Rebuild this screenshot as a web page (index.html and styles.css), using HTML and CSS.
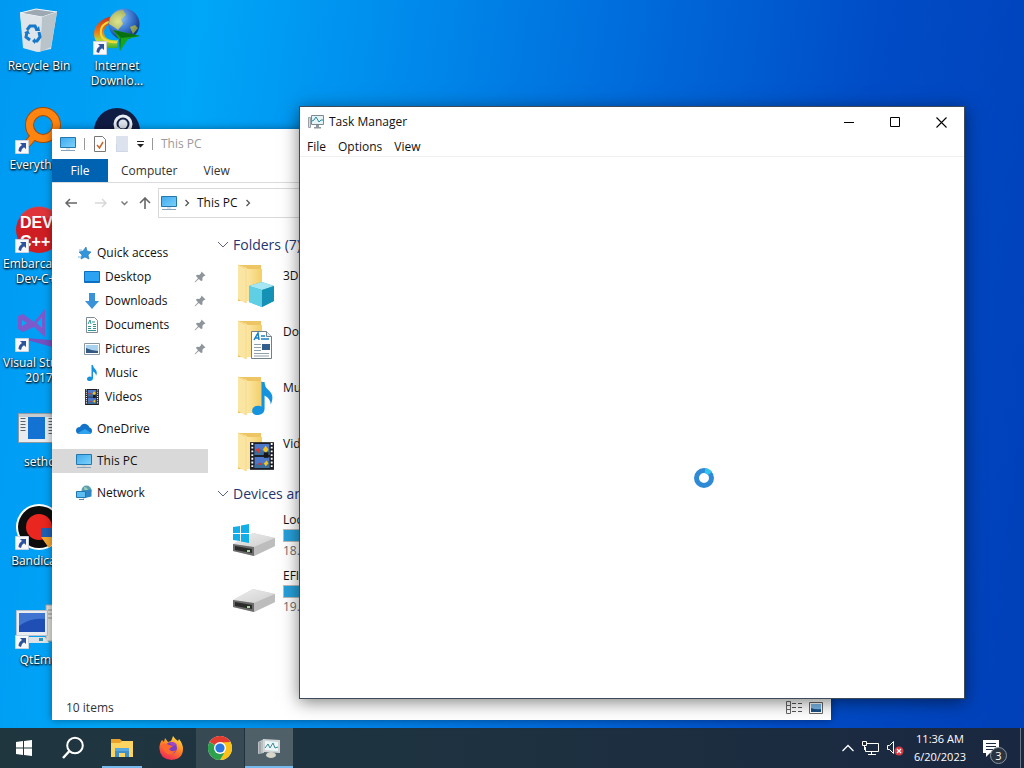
FILE: index.html
```html
<!DOCTYPE html>
<html lang="en">
<head>
    <meta charset="UTF-8">
    <meta name="viewport" content="width=device-width, initial-scale=1.0">
    <title>Desktop</title>
    <link rel="stylesheet" href="styles.css">
</head>
<body>

    <!-- shared icons -->
    <svg class="sprite" aria-hidden="true">
        <defs>
            <linearGradient id="gScreen" x1="0" y1="0" x2="1" y2="1">
                <stop offset="0" stop-color="#3fa9ee"/><stop offset="1" stop-color="#7dd3fb"/>
            </linearGradient>
            <linearGradient id="gFolder" x1="0" y1="0" x2="1" y2="0">
                <stop offset="0" stop-color="#fbe6a2"/><stop offset="1" stop-color="#f4ce68"/>
            </linearGradient>
            <linearGradient id="gDrive" x1="0" y1="0" x2="1" y2="1">
                <stop offset="0" stop-color="#ededed"/><stop offset="1" stop-color="#cfcfcf"/>
            </linearGradient>
            <linearGradient id="gFox" x1="0.8" y1="0" x2="0.3" y2="1">
                <stop offset="0" stop-color="#ffe14a"/><stop offset="0.45" stop-color="#ff8a22"/><stop offset="1" stop-color="#f0245a"/>
            </linearGradient>
            <radialGradient id="gGlobe" cx="0.35" cy="0.3" r="0.75">
                <stop offset="0" stop-color="#a9cfe6"/><stop offset="0.4" stop-color="#4f8bdc"/><stop offset="0.7" stop-color="#2a60b8"/><stop offset="1" stop-color="#12306e"/>
            </radialGradient>
            <radialGradient id="gLand" cx="0.3" cy="0.5" r="0.8">
                <stop offset="0" stop-color="#f0ec7a"/><stop offset="1" stop-color="#8d9a3a"/>
            </radialGradient>
            <linearGradient id="gRing" x1="0" y1="0" x2="0" y2="1">
                <stop offset="0" stop-color="#c8301a"/><stop offset="0.5" stop-color="#ee7a1b"/><stop offset="0.75" stop-color="#b6d636"/><stop offset="1" stop-color="#3fae2a"/>
            </linearGradient>
        </defs>
        <symbol id="shortcut" viewBox="0 0 14 14">
            <path d="M.5.5h13v13H.5z" fill="#f6f8fb" stroke="#c9d3df"/>
            <path d="M5 3h6v6L9 7.200Q6.500 8.500 6 12L3.500 11Q3.500 7 7 5z" fill="#2f529c"/>
        </symbol>
        <symbol id="pc" viewBox="0 0 16 16">
            <path d="M.5 1.500h15v10H.5z" fill="url(#gScreen)" stroke="#2477ab"/>
            <path d="M1 14.500h14" stroke="#86a5bd"/>
            <path d="M6 13h4" stroke="#b8c9d6"/>
        </symbol>
        <symbol id="pin" viewBox="0 0 12 12">
            <path d="M7.500.5l4 4-1.500.6-1.600 1.700.1 2.700L7 10 4.800 7.900 1 11.500.6 11 4 7.200 2 5l.8-1.200 2.500.2L7 2.200z" fill="#8e9499"/>
        </symbol>
        <symbol id="folder" viewBox="0 0 48 48">
            <path d="M6 6q0-1 1-1h22v36H6z" fill="#eec565"/>
            <path d="M6 5l9 3v33q0 3-2 2l-7-4z" fill="#fbe5a3"/>
            <path d="M15 9h15v32H15z" fill="url(#gFolder)"/>
            <path d="M6 5l8 4v34" fill="none" stroke="#f7da8b"/>
        </symbol>
        <symbol id="film" viewBox="0 0 26 30">
            <path d="M0 0h26v30H0z" fill="#1e1f24"/>
            <path d="M5 2h16v12H5zM5 16h16v12H5z" fill="#4d78c9"/>
            <path d="M5 10l5-3 5 4 6-2v5H5zM5 25l6-3 4 2 6-4v8H5z" fill="#3c6f9c"/>
            <path d="M6 8l3-2 2 3-2 3zM8 24l3-2 2 3z" fill="#d83a2d"/>
            <path d="M14 8l3-4 3 4-3 4zM15 23l3-3 2 3-3 3z" fill="#f2c21d"/>
            <path d="M15 11h5v6h-5z" fill="#171717"/>
            <path d="M2.500 1v28M23.500 1v28" stroke="#fff" stroke-width="2" stroke-dasharray="2 2"/>
        </symbol>
        <symbol id="note" viewBox="0 0 20 32">
            <path d="M9 0h3q0 5 4 8 6 5 2 14 0-6-6-9v13q0 5-6 6-6 0-6-4 0-5 6-5 2 0 3 1z" fill="#1593df"/>
        </symbol>
        <symbol id="chevR" viewBox="0 0 6 8"><path d="M1.500 1l3 3-3 3" fill="none" stroke="#555" stroke-width="1.300"/></symbol>
        <symbol id="chevD" viewBox="0 0 12 8"><path d="M1 1l5 5 5-5" fill="none" stroke="#5a6480"/></symbol>
        <symbol id="drive" viewBox="0 0 44 24">
            <path d="M1 11L21 0l22 5v8L22 23 1 18z" fill="#cfcfcf"/>
            <path d="M1 11L21 0l22 5-21 9z" fill="url(#gDrive)"/>
            <path d="M22 14l21-9v8L22 23z" fill="#bdbdbd"/>
            <path d="M1 11l21 3v9L1 18z" fill="#6a6a6a"/>
            <path d="M3 13l17 3v4L3 17z" fill="#2a2a2a"/>
            <path d="M15 17h3v2h-3z" fill="#a8d8a0"/>
        </symbol>
    </svg>

    <main class="desktop">
        <div class="shortcuts">
            <a href="#" class="shortcut">
                <span class="picture">
                    <svg viewBox="0 0 48 48">
                        <path d="M5 5l16-4 21 3-6 37-14 3-14-4z" fill="#dfe6ea" opacity=".95"/>
                        <path d="M5 5l16-4 21 3-15 5z" fill="#9ca9b3" stroke="#f3f6f8"/>
                        <path d="M27 9l15-5-6 35-11 5z" fill="#b9c3ca"/>
                        <path d="M5 5l22 4-2 35-16-4z" fill="#dde5ea"/>
                        <path d="M12 22l3-4h5l2 4M24 24l1 5-3 4h-3M15 32l-4-3 1-5" fill="none" stroke="#1678c8" stroke-width="3"/>
                        <path d="M20 23h5l-1-5zM20 30v6l-3-3zM9 25l4-3 2 4z" fill="#1678c8"/>
                    </svg>
                </span>
                <span class="label">Recycle Bin</span>
            </a>
            <a href="#" class="shortcut">
                <span class="picture">
                    <svg viewBox="0 0 48 48">
                        <path d="M20 8C8 10 1 18 1 26c0 10 9 15 23 14l1-8c-9 1-14-2-14-8 0-5 4-8 9-9z" fill="url(#gRing)"/>
                        <path d="M19 13C10 15 7 20 8 26c1 6 8 9 16 8" fill="none" stroke="#f4d934" stroke-width="2"/>
                        <circle cx="31" cy="16" r="15.500" fill="url(#gGlobe)"/>
                        <path d="M17 10q5-8 13-8l3 5-5 4 2 5-5 6-4-3-5-3zM37 19l5-2 3 3-5 6z" fill="url(#gLand)" opacity=".85"/>
                        <path d="M20 22l27 6-12 3-8 12-1-12z" fill="#18a51e"/>
                        <path d="M20 22l27 6-19 2zM28 30l-1 13-1-12z" fill="#087013"/>
                    </svg>
                    <svg class="badge"><use href="#shortcut"/></svg>
                </span>
                <span class="label">Internet Downlo...</span>
            </a>
            <a href="#" class="shortcut">
                <span class="picture">
                    <svg viewBox="0 0 48 48">
                        <path d="M6 44l12-14" stroke="#a34c05" stroke-width="8"/>
                        <circle cx="28" cy="18" r="13.500" fill="none" stroke="#a34c05" stroke-width="9"/>
                        <path d="M7 43l12-14" stroke="#ff8410" stroke-width="6"/>
                        <circle cx="28" cy="18" r="13.500" fill="none" stroke="#ff8410" stroke-width="7"/>
                    </svg>
                    <svg class="badge"><use href="#shortcut"/></svg>
                </span>
                <span class="label">Everything</span>
            </a>
            <a href="#" class="shortcut">
                <span class="picture">
                    <svg viewBox="0 0 48 48">
                        <circle cx="24" cy="24" r="23" fill="#cf1d24"/>
                        <path d="M4 12a23 23 0 0 1 40 0z" fill="#e8444a" opacity=".6"/>
                        <text x="5" y="22" class="dev-text">DEV</text>
                        <text x="5" y="41" class="dev-text">C++</text>
                    </svg>
                    <svg class="badge"><use href="#shortcut"/></svg>
                </span>
                <span class="label">Embarcadero Dev-C++</span>
            </a>
            <a href="#" class="shortcut">
                <span class="picture">
                    <svg viewBox="0 0 48 48">
                        <path d="M3 11l5-2 11 8L30 4v28L19 22 8 27l-5-3z" fill="#7d5acb"/>
                        <path d="M7 15v6l5-3zM27 12l-5 6 5 5z" fill="#00aafa"/>
                        <path d="M10 33l38 3v9L12 35z" fill="#7450c0"/>
                    </svg>
                    <svg class="badge"><use href="#shortcut"/></svg>
                </span>
                <span class="label">Visual Studio 2017</span>
            </a>
            <a href="#" class="shortcut">
                <span class="picture">
                    <svg viewBox="0 0 48 48">
                        <path d="M3.500 9.500h41v29h-41z" fill="#e9ecee" stroke="#8f9aa3"/>
                        <path d="M4 10h40v3H4z" fill="#c7ccd1"/>
                        <path d="M13 13h17v22H13z" fill="#1473d2"/>
                        <path d="M8 14v15M36 14v17" stroke="#5c646b" stroke-width="5" stroke-dasharray="1 2"/>
                    </svg>
                </span>
                <span class="label">sethc</span>
            </a>
            <a href="#" class="shortcut">
                <span class="picture">
                    <svg viewBox="0 0 48 48">
                        <circle cx="24" cy="24" r="23" fill="#fff"/>
                        <circle cx="24" cy="24" r="21" fill="#0d0d0d"/>
                        <circle cx="24" cy="24" r="13" fill="#e9261f"/>
                        <path d="M26 25h20v9H26z" fill="#1f5fb4"/>
                        <path d="M26 34h18l-10 11z" fill="#f2a531"/>
                    </svg>
                    <svg class="badge"><use href="#shortcut"/></svg>
                </span>
                <span class="label">Bandicam</span>
            </a>
            <a href="#" class="shortcut">
                <span class="picture">
                    <svg viewBox="0 0 48 48">
                        <path d="M31 3h14v36H31z" fill="#dfdfd8" stroke="#a7a9a6"/>
                        <path d="M33 8h10M33 12h10M33 16h10" stroke="#8e918f"/>
                        <path d="M1.500 8.500h31v25h-31z" fill="#e9edf2" stroke="#b9c2cc"/>
                        <path d="M4 11h26v19H4z" fill="#1f4fb4"/>
                        <path d="M4 11h26v6Q16 15 4 24z" fill="#3f74d0"/>
                        <path d="M12 35h18l4 6H14z" fill="#dce2e6"/>
                        <path d="M24 36h4v3h-4z" fill="#2c95b5"/>
                    </svg>
                    <svg class="badge"><use href="#shortcut"/></svg>
                </span>
                <span class="label">QtEmu</span>
            </a>
            <a href="#" class="shortcut steam" aria-label="Steam">
                <span class="picture">
                    <svg viewBox="0 0 48 48">
                        <circle cx="24" cy="24" r="23" fill="#111c44"/>
                        <circle cx="30" cy="17" r="8" fill="#111c44" stroke="#e8ebf2" stroke-width="3"/>
                        <circle cx="30" cy="17" r="4.500" fill="#dfe3ec"/>
                        <path d="M23 19l-6 10-14-4v5l14 7 7-5 9-7z" fill="#e8ebf2"/>
                    </svg>
                </span>
            </a>
        </div>

        <section class="window explorer">
            <header class="quickbar">
                <svg class="icon16"><use href="#pc"/></svg>
                <span class="sep"></span>
                <button aria-label="Properties">
                    <svg width="14" height="16" viewBox="0 0 14 16"><path d="M1.500.5h8l3 3v12h-11z" fill="#fff" stroke="#777"/><path d="M4 9l2.500 3L10 6" fill="none" stroke="#c8632b" stroke-width="1.500"/></svg>
                </button>
                <button aria-label="New folder">
                    <svg width="14" height="16" viewBox="0 0 14 16"><path d="M1 0h12v16H1z" fill="#dde2ef"/><path d="M1.500 8v7.500h11" fill="none" stroke="#cfd6e6"/></svg>
                </button>
                <button aria-label="Customize">
                    <svg width="7" height="8" viewBox="0 0 7 8"><path d="M0 1.500h7" stroke="#222"/><path d="M0 4h7L3.500 7.500z" fill="#222"/></svg>
                </button>
                <span class="sep"></span>
                <span class="caption">This PC</span>
            </header>
            <nav class="ribbon">
                <button class="active">File</button>
                <button>Computer</button>
                <button>View</button>
            </nav>
            <div class="toolbar">
                <button class="wide" aria-label="Back"><svg width="12" height="10" viewBox="0 0 12 10"><path d="M12 5H1M5 1L1 5l4 4" fill="none" stroke="#666" stroke-width="1.500"/></svg></button>
                <button class="wide" aria-label="Forward"><svg width="12" height="10" viewBox="0 0 12 10"><path d="M0 5h11M7 1l4 4-4 4" fill="none" stroke="#d8d8d8" stroke-width="1.500"/></svg></button>
                <button class="narrow" aria-label="Recent locations"><svg width="7" height="5" viewBox="0 0 7 5"><path d="M.5.5l3 3 3-3" fill="none" stroke="#777" stroke-width="1.400"/></svg></button>
                <button class="up" aria-label="Up"><svg width="12" height="12" viewBox="0 0 12 12"><path d="M6 12V1M1 6l5-5 5 5" fill="none" stroke="#666" stroke-width="1.600"/></svg></button>
                <div class="address">
                    <svg class="icon16"><use href="#pc"/></svg>
                    <svg class="crumb"><use href="#chevR"/></svg>
                    <button>This PC</button>
                    <svg class="crumb"><use href="#chevR"/></svg>
                </div>
            </div>
            <div class="content">
                <nav class="sidebar">
                    <a href="#">
                        <svg class="icon16" viewBox="0 0 16 16"><path d="M10 2l1 4 4 1-3 3 1 4-4-2-4 2 1-4-3-3 4-1z" fill="#3396dd" stroke="#1d73b4" stroke-width=".6"/><path d="M3 5h3M2 12h3" stroke="#6db7eb"/></svg>
                        <span>Quick access</span>
                    </a>
                    <a href="#" class="nested">
                        <svg class="icon16" viewBox="0 0 16 16"><path d="M.5 2.500h15v11H.5z" fill="#2ba3f2" stroke="#0d6fbd"/><path d="M1 12.500h14" stroke="#0d6fbd"/></svg>
                        <span>Desktop</span>
                        <svg class="pin"><use href="#pin"/></svg>
                    </a>
                    <a href="#" class="nested">
                        <svg class="icon16" viewBox="0 0 16 16"><path d="M5 0h6v8h4l-7 8-7-8h4z" fill="#3a93d8"/></svg>
                        <span>Downloads</span>
                        <svg class="pin"><use href="#pin"/></svg>
                    </a>
                    <a href="#" class="nested">
                        <svg class="icon16" viewBox="0 0 16 16"><path d="M2.500.5h8l3 3v12h-11z" fill="#fff" stroke="#7f8b93"/><path d="M4 7l2-4 1 4M8 5h3M4 9.500h3M9 7.500h3M9 9.500h3M4 11.500h3M9 11.500h3M4 13.500h8" fill="none" stroke="#2e958f"/></svg>
                        <span>Documents</span>
                        <svg class="pin"><use href="#pin"/></svg>
                    </a>
                    <a href="#" class="nested">
                        <svg class="icon16" viewBox="0 0 16 16"><path d="M.5 2.500h15v11H.5z" fill="#fff" stroke="#8b98a3"/><path d="M2 4h12v8H2z" fill="#a9d2ef"/><path d="M2 7q6 3 12 3v2H2z" fill="#33597f"/></svg>
                        <span>Pictures</span>
                        <svg class="pin"><use href="#pin"/></svg>
                    </a>
                    <a href="#" class="nested">
                        <svg class="icon16"><use href="#note"/></svg>
                        <span>Music</span>
                    </a>
                    <a href="#" class="nested">
                        <svg class="icon16"><use href="#film"/></svg>
                        <span>Videos</span>
                    </a>
                    <a href="#" class="root">
                        <svg class="icon16" viewBox="0 0 16 16"><path d="M4 13q-4 0-4-3.500T4 6q2-4 6-3 3 1 3.500 3.500Q16 7 16 10t-3 3z" fill="#1273c8"/><path d="M2 12l7-4 6 4q-1 1-2 1H4z" fill="#2fa4ee"/></svg>
                        <span>OneDrive</span>
                    </a>
                    <a href="#" class="root selected">
                        <svg class="icon16"><use href="#pc"/></svg>
                        <span>This PC</span>
                    </a>
                    <a href="#" class="root">
                        <svg class="icon16" viewBox="0 0 16 16"><circle cx="10.500" cy="5.500" r="5" fill="#5c9fb0"/><path d="M8 2q3 0 4 3l-3 3z" fill="#9ccfb4"/><path d="M7 5.500l8.500-1v7l-8.500 2z" fill="#2f86c4"/><path d="M.5 6.500h9v6h-9z" fill="#5cbdf2" stroke="#2477ab"/><path d="M3 14.500h5" stroke="#5d8ba8"/></svg>
                        <span>Network</span>
                    </a>
                </nav>
                <div class="files">
                    <h2><svg class="arrow"><use href="#chevD"/></svg>Folders (7)</h2>
                    <a href="#" class="tile">
                        <svg class="big" viewBox="0 0 48 48"><use href="#folder"/><path d="M17 26l13-4 12 4v15l-12 6-13-5z" fill="#2fb5d8"/><path d="M17 26l13-4 12 4-12 4z" fill="#a6e6f2"/><path d="M30 30l12-4v15l-12 6z" fill="#1591b5"/><path d="M17 26l13 4v17l-13-5z" fill="#5fcfe5"/></svg>
                        <span class="name">3D Objects</span>
                    </a>
                    <a href="#" class="tile">
                        <svg class="big" viewBox="0 0 48 48"><use href="#folder"/><path d="M19.500 15.500h15l5 5v22h-20z" fill="#fff" stroke="#70808b"/><path d="M34.500 15.500v5h5" fill="#e6ecf0" stroke="#70808b"/><path d="M22 24l4-7 1 7M23 22h4M29 20h4M29 23h8" fill="none" stroke="#1680c4" stroke-width="1.500"/><path d="M22 28.500h7M22 31.500h7M22 34.500h7M22 37.500h15M22 40h15" stroke="#8fa0ab"/><path d="M30 28h8v6h-8z" fill="#315f8d"/></svg>
                        <span class="name">Documents</span>
                    </a>
                    <a href="#" class="tile">
                        <svg class="big" viewBox="0 0 48 48"><use href="#folder"/><use href="#note" x="20" y="10" width="21" height="33"/></svg>
                        <span class="name">Music</span>
                    </a>
                    <a href="#" class="tile">
                        <svg class="big" viewBox="0 0 48 48"><use href="#folder"/><use href="#film" x="18" y="14" width="24" height="28"/></svg>
                        <span class="name">Videos</span>
                    </a>
                    <h2><svg class="arrow"><use href="#chevD"/></svg>Devices and drives (3)</h2>
                    <a href="#" class="tile">
                        <svg class="big" viewBox="0 0 48 48"><use href="#drive" x="0" y="24" width="44" height="24"/><path d="M1 18l7-1v7H1zM9 16.500l8-1.500v9H9zM1 25h7v7l-7-1zM9 25h8v9l-8-1.500z" fill="#12aee8"/></svg>
                        <span class="drive">
                            <span class="name">Local Disk (C:)</span>
                            <span class="bar"></span>
                            <span class="free">18.2 GB free of 49.4 GB</span>
                        </span>
                    </a>
                    <a href="#" class="tile">
                        <svg class="big" viewBox="0 0 48 48"><use href="#drive" x="0" y="24" width="44" height="24"/></svg>
                        <span class="drive">
                            <span class="name">EFI (E:)</span>
                            <span class="bar"></span>
                            <span class="free">19.5 MB free of 95.0 MB</span>
                        </span>
                    </a>
                </div>
            </div>
            <footer class="status">
                <span>10 items</span>
                <button aria-label="Details"><svg width="18" height="14" viewBox="0 0 18 14"><path d="M.5.5h4v12h-4zM.5 4.500h4M.5 8.500h4" fill="none" stroke="#666"/><path d="M6 2.500h12M6 6.500h12M6 10.500h12" stroke="#555" stroke-dasharray="4 2"/></svg></button>
                <button aria-label="Large icons"><svg width="14" height="12" viewBox="0 0 14 12"><path d="M.5.5h13v11H.5z" fill="#fff" stroke="#666"/><path d="M2 2h10v8H2z" fill="#79b6e6"/><path d="M2 6q5 2 10 1v3H2z" fill="#1d4f86"/></svg></button>
            </footer>
        </section>

        <section class="window taskmanager">
            <header class="titlebar">
                <svg class="icon16" viewBox="0 0 16 16"><path d="M.5 3.500h2v10h-2z" fill="#d7dcdf" stroke="#9aa2a7"/><path d="M3.500 1.500h12v9h-12z" fill="#e6f3f4" stroke="#7b8a92"/><path d="M4 7l2-1 2-3 3 5 2-2h2" fill="none" stroke="#2a8a9e"/><path d="M8 11h3v2h2v1.500H6V13h2z" fill="#8d979c"/></svg>
                <h1>Task Manager</h1>
                <button aria-label="Minimize"><svg width="11" height="11" viewBox="0 0 11 11"><path d="M0 5.500h10" stroke="#000"/></svg></button>
                <button aria-label="Maximize"><svg width="11" height="11" viewBox="0 0 11 11"><path d="M.5.5h9v9h-9z" fill="none" stroke="#000"/></svg></button>
                <button aria-label="Close"><svg width="11" height="11" viewBox="0 0 11 11"><path d="M.5.5l10 10M10.500.5l-10 10" stroke="#000" stroke-width="1.100"/></svg></button>
            </header>
            <nav class="menu">
                <button>File</button>
                <button>Options</button>
                <button>View</button>
            </nav>
            <div class="blank"></div>
        </section>

        <svg class="cursor" viewBox="0 0 22 22" role="img" aria-label="Busy">
            <circle cx="11" cy="11" r="7.500" fill="none" stroke="#2f8ad6" stroke-width="5"/>
            <path d="M12 3.500a7.500 7.500 0 0 1 5 3" fill="none" stroke="#2fc4f2" stroke-width="5"/>
        </svg>
    </main>

    <footer class="taskbar">
        <button class="task" aria-label="Start">
            <svg width="16" height="16" viewBox="0 0 16 16"><path d="M0 2l7-1v6.500H0zM8 1l8-1v7.500H8zM0 8.500h7V15l-7-1zM8 8.500h8V16l-8-1z" fill="#fff"/></svg>
        </button>
        <button class="task" aria-label="Search">
            <svg width="24" height="24" viewBox="0 0 24 24"><circle cx="14" cy="9.500" r="7.800" fill="none" stroke="#fff" stroke-width="2"/><path d="M8.500 15L2 22" stroke="#fff" stroke-width="2.500"/></svg>
        </button>
        <button class="task running" aria-label="File Explorer">
            <svg width="24" height="24" viewBox="0 0 24 24"><path d="M1 3h9l2 2h11v3H1z" fill="#e9a22b"/><path d="M1 7h9l2-2h11v16H1z" fill="#fcd462"/><path d="M5 13h14v8h-4v-4H9v4H5z" fill="#3f8fc9"/><path d="M5 12h14v3H5z" fill="#57a8de"/></svg>
        </button>
        <button class="task" aria-label="Firefox">
            <svg width="26" height="26" viewBox="0 0 26 26"><path d="M15 1q2 3 5 5l1-2q4 5 4 10 0 10-11.500 11Q2 24 1.500 14 1 9 4 5l2 2 1-4 3 4 3-1q1-2 2-5z" fill="url(#gFox)"/><circle cx="13" cy="13" r="6" fill="#7a3fc5"/><path d="M4 9q4-1 7 1l4 1-4 3q3 4 7 1-2 5-8 4-5-2-6-10z" fill="#ff6a2c"/><path d="M11 8q5-3 8 2l-4 1z" fill="#a046c8"/></svg>
        </button>
        <button class="task hover" aria-label="Chrome">
            <svg width="24" height="24" viewBox="0 0 24 24"><circle cx="12" cy="12" r="12" fill="#fff"/><path d="M12 12L1.600 6a12 12 0 0 1 20.800 0z" fill="#e33b2e"/><path d="M12 12l10.400-6A12 12 0 0 1 12 24l4.500-8z" fill="#fbc116"/><path d="M12 12l4 5.500L12 24A12 12 0 0 1 1.600 6z" fill="#2da14c"/><path d="M12 6h10.400L17 12z" fill="#fbc116"/><path d="M1.600 6h20.800L12 6.500z" fill="#e33b2e"/><circle cx="12" cy="12" r="6" fill="#fff"/><circle cx="12" cy="12" r="4.600" fill="#2c76e0"/></svg>
        </button>
        <button class="task current" aria-label="Task Manager">
            <svg width="24" height="24" viewBox="0 0 24 24"><path d="M1 6l6-3v14l-6 1z" fill="#b9bec1"/><path d="M3 6v11" stroke="#858c90"/><path d="M6 3l17 1v13L6 16z" fill="#cfd5d7"/><path d="M8 5l13 1v9L8 14z" fill="#edf6f7"/><path d="M8 12l3-4 2 4 3-5 2 5 3-1" fill="none" stroke="#3a8998"/><ellipse cx="14" cy="19" rx="5" ry="3" fill="#d8d5cb"/></svg>
        </button>
        <div class="tray">
            <button aria-label="Show hidden icons"><svg width="12" height="8" viewBox="0 0 12 8"><path d="M.5 7L6 1.500 11.500 7" fill="none" stroke="#fff" stroke-width="1.300"/></svg></button>
            <button aria-label="Network"><svg width="17" height="15" viewBox="0 0 17 15"><path d="M5 2.500h11.500v8H3.500V6M9.500 11v3M6 13.500h8M.5.5h4v4h-4zM2.500 5v4" fill="none" stroke="#fff"/></svg></button>
            <button aria-label="Volume muted"><svg width="17" height="16" viewBox="0 0 17 16"><path d="M.5 5.500h2l4-4v12l-4-4h-2z" fill="none" stroke="#fff"/><circle cx="12" cy="11" r="4.500" fill="#d63a43"/><path d="M10 9l4 4M14 9l-4 4" stroke="#fff" stroke-width="1.200"/></svg></button>
            <button class="clock"><span>11:36 AM</span><span>6/20/2023</span></button>
            <button class="notices" aria-label="Notifications">
                <svg width="18" height="18" viewBox="0 0 18 18"><path d="M1 1h16v13H8l-4 4v-4H1z" fill="#fff"/><path d="M4 4.500h10M4 7.500h10M4 10.500h7" stroke="#1b2a3e"/></svg>
                <span class="count">3</span>
            </button>
        </div>
    </footer>

</body>
</html>
```
FILE: styles.css
```css
*{
    margin: 0; padding: 0;
    box-sizing: border-box;
}
body{
    display: flex;
    flex-direction: column;
    height: 100vh;
    overflow: hidden;
    font-family: "Open Sans", "Noto Sans", sans-serif;
    font-size: 12px;
    line-height: 16px;
    color: #111;
    background: linear-gradient(98deg, #0099f2 0%, #00a6f8 18%, #0088ea 38%, #0069da 58%, #004cc6 78%, #003fb8 100%);
}
button{
    border: none;
    background: none;
    font: inherit;
    color: inherit;
}
a{
    color: inherit;
    text-decoration: none;
}
svg{
    flex: none;
}
.sprite{
    position: absolute;
    width: 0;
    height: 0;
}
.icon16{
    width: 16px;
    height: 16px;
}

/* desktop */
.desktop{
    position: relative;
    flex: 1;
    min-height: 0;
}
.shortcuts{
    display: grid;
    grid-template-columns: 78px 78px;
    grid-auto-rows: 99px;
    grid-auto-flow: dense;
}
.shortcut{
    grid-column: 1;
    display: flex;
    flex-direction: column;
    align-items: center;
    gap: 2px;
    padding-top: 8px;
}
.shortcut:nth-child(2), .steam{
    grid-column: 2;
}
.picture{
    position: relative;
    width: 48px;
    height: 48px;
}
.picture svg{
    width: 48px;
    height: 48px;
}
.picture .badge{
    position: absolute;
    left: 0;
    bottom: 1px;
    width: 14px;
    height: 14px;
}
.dev-text{
    font-family: "Liberation Sans", sans-serif;
    font-size: 16px;
    font-weight: bold;
    fill: #fff;
}
.label{
    max-width: 72px;
    line-height: 15px;
    text-align: center;
    color: #fff;
    text-shadow: 0 1px 2px #000, 1px 1px 2px rgba(0,0,0,.8);
}

/* windows */
.window{
    position: absolute;
    display: flex;
    flex-direction: column;
    overflow: hidden;
    background: #fff;
}
.explorer{
    left: 52px;
    top: 129px;
    right: 193px;
    bottom: 8px;
    box-shadow: 0 0 8px rgba(0,0,0,.4);
}
.taskmanager{
    left: 299px;
    top: 106px;
    right: 59px;
    bottom: 29px;
    border: 1px solid #3c4a5a;
    box-shadow: 0 3px 16px rgba(0,0,0,.5);
}

.quickbar{
    display: flex;
    align-items: center;
    gap: 8px;
    height: 30px;
    padding-left: 8px;
}
.quickbar button{
    display: flex;
}
.sep{
    width: 1px;
    height: 12px;
    background: #999;
}
.caption{
    color: #9a9a9a;
}
.ribbon{
    display: flex;
    height: 24px;
    border-bottom: 1px solid #dadbdc;
    color: #333;
}
.ribbon button{
    padding: 0 13px;
}
.ribbon .active{
    width: 56px;
    background: #0063b1;
    color: #fff;
}
.toolbar{
    display: flex;
    align-items: center;
    height: 40px;
    padding-left: 4px;
}
.toolbar button{
    display: flex;
    align-items: center;
    justify-content: center;
    height: 24px;
}
.toolbar .wide{
    width: 30px;
}
.toolbar .narrow{
    width: 16px;
}
.toolbar .up{
    width: 26px;
}
.address{
    flex: 1;
    display: flex;
    align-items: center;
    gap: 7px;
    height: 30px;
    padding-left: 2px;
    border: 1px solid #d9d9d9;
}
.crumb{
    width: 6px;
    height: 8px;
}
.content{
    flex: 1;
    display: flex;
    min-height: 0;
}
.sidebar{
    width: 156px;
    padding-top: 18px;
}
.sidebar a{
    display: flex;
    align-items: center;
    gap: 5px;
    height: 24px;
    padding-left: 24px;
}
.sidebar .nested{
    padding-left: 32px;
}
.sidebar .root{
    margin-top: 8px;
}
.sidebar .selected{
    background: #d9d9d9;
}
.pin{
    width: 12px;
    height: 12px;
    margin-left: auto;
    margin-right: 2px;
}
.files{
    flex: 1;
    padding-top: 12px;
    padding-left: 9px;
}
.files h2{
    display: flex;
    align-items: center;
    gap: 4px;
    height: 20px;
    margin-bottom: 5px;
    font-size: 14px;
    font-weight: normal;
    color: #26356f;
}
.arrow{
    width: 12px;
    height: 8px;
}
.tile{
    display: flex;
    gap: 3px;
    height: 56px;
    padding-left: 15px;
}
.big{
    width: 48px;
    height: 48px;
}
.tile > .name{
    margin-top: 8px;
}
.drive{
    display: flex;
    flex-direction: column;
    gap: 1px;
    width: 180px;
    padding-top: 3px;
}
.bar{
    height: 13px;
    border: 1px solid #bcbcbc;
    background: #26a0da;
}
.free{
    color: #6d6d6d;
}
.status{
    display: flex;
    align-items: center;
    gap: 5px;
    height: 24px;
    padding: 0 8px 0 14px;
    color: #333;
}
.status span{
    margin-right: auto;
}
.status button{
    display: flex;
}

.titlebar{
    display: flex;
    align-items: center;
    height: 30px;
    padding-left: 8px;
}
.titlebar h1{
    margin-left: 5px;
    margin-right: auto;
    font-size: 12px;
    font-weight: normal;
}
.titlebar button{
    width: 46px;
    height: 30px;
    display: flex;
    align-items: center;
    justify-content: center;
}
.menu{
    display: flex;
    gap: 12px;
    height: 20px;
    padding-left: 7px;
    border-bottom: 1px solid #f0f0f0;
}
.blank{
    flex: 1;
}
.cursor{
    position: absolute;
    left: 693px;
    top: 467px;
    width: 22px;
    height: 22px;
}

/* taskbar */
.taskbar{
    display: flex;
    gap: 1px;
    height: 40px;
    background: linear-gradient(90deg, #20363f, #1d3140 50%, #1a2740);
    color: #fff;
}
.task{
    display: flex;
    align-items: center;
    justify-content: center;
    width: 48px;
}
.running{
    background: linear-gradient(#76b9ed, #76b9ed) center bottom / 40px 2px no-repeat;
}
.hover{
    background: #374a53;
}
.current{
    background: #4f6069;
    border-bottom: 2px solid #76b9ed;
    padding-top: 2px;
}
.tray{
    display: flex;
    align-items: center;
    gap: 8px;
    margin-left: auto;
    padding-right: 3px;
}
.tray button{
    display: flex;
}
.tray .clock{
    flex-direction: column;
    align-items: center;
    font-size: 11px;
    line-height: 18px;
    padding: 0 2px;
}
.tray .notices{
    position: relative;
    align-items: center;
    height: 40px;
    padding: 0 20px 0 6px;
    border-right: 1px solid #6b7684;
}
.count{
    position: absolute;
    left: 14px;
    top: 19px;
    width: 17px;
    height: 17px;
    border: 1px solid #8b95a0;
    border-radius: 50%;
    background: #2a3440;
    font-size: 11px;
    line-height: 15px;
    text-align: center;
}
```
